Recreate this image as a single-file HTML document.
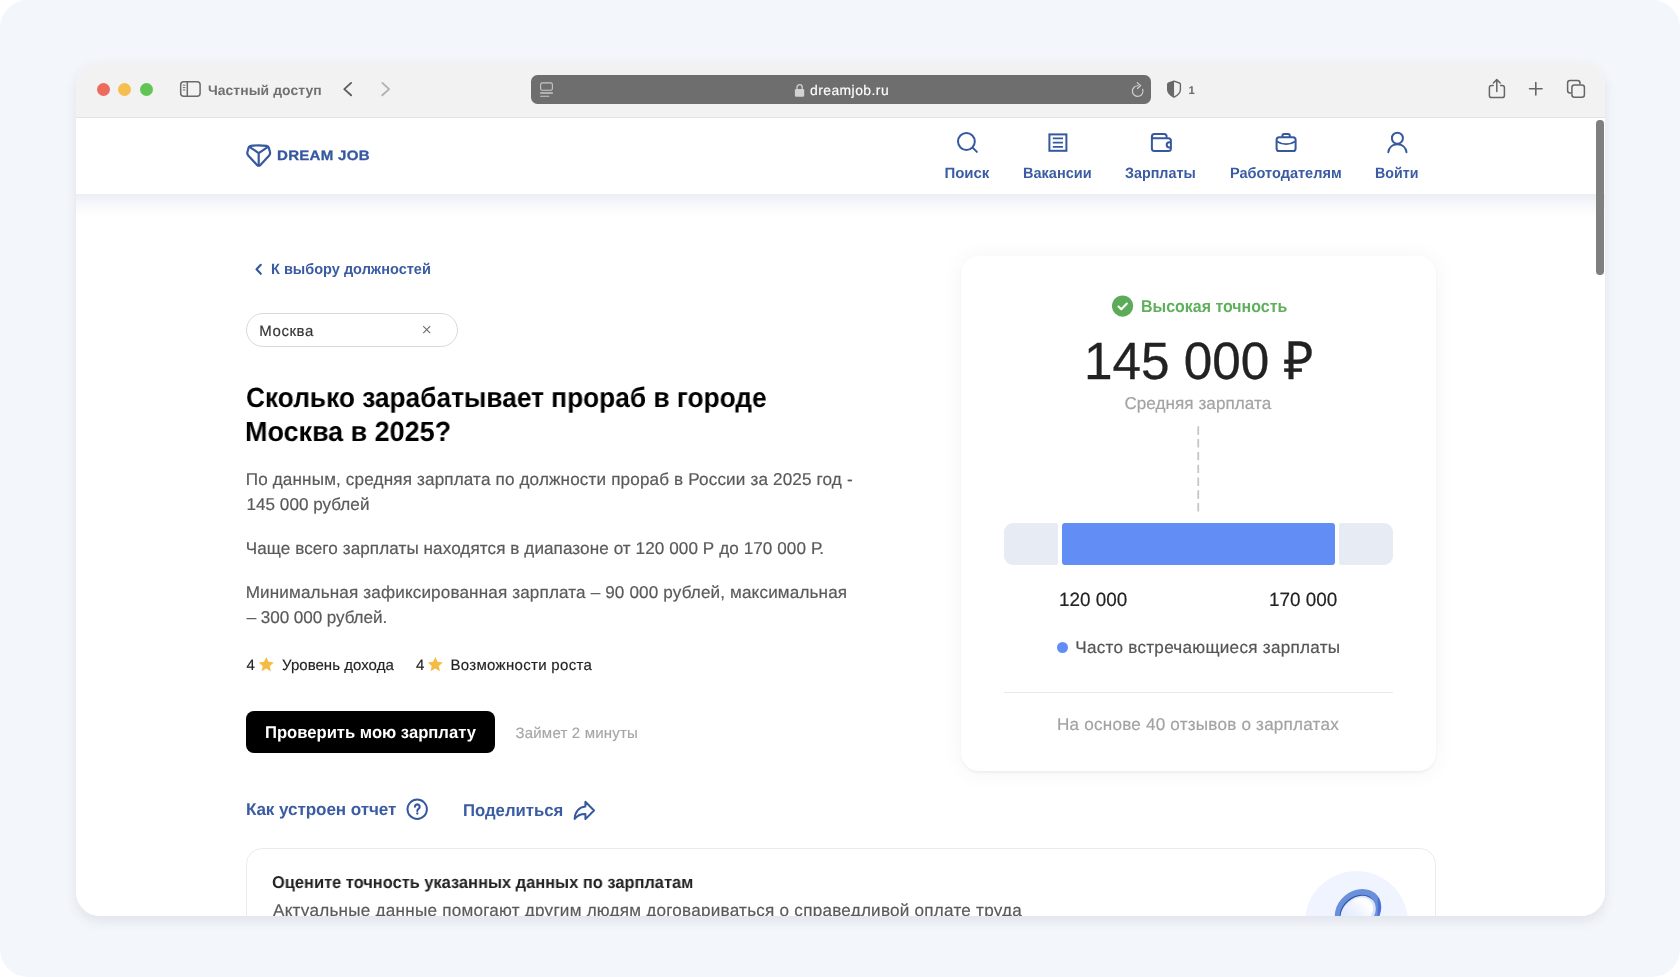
<!DOCTYPE html>
<html lang="ru">
<head>
<meta charset="utf-8">
<title>Сколько зарабатывает прораб в городе Москва в 2025? — Dream Job</title>
<style>
html,body{margin:0;padding:0;background:#fff;}
body{width:1680px;height:977px;overflow:hidden;position:relative;font-family:"Liberation Sans",sans-serif;}
.outer{position:absolute;left:0;top:0;width:1680px;height:977px;background:#f3f6fa;border-radius:28px;}
.winshadow{position:absolute;left:76px;top:62px;width:1529px;height:854px;border-radius:24px;box-shadow:0 5px 12px rgba(85,100,130,.12);}
.win{position:absolute;left:76px;top:62px;width:1529px;height:854px;border-radius:24px;overflow:hidden;background:#fff;}
.page{position:absolute;left:-76px;top:-62px;width:1680px;height:977px;will-change:transform;}
.page *{position:absolute;box-sizing:border-box;}
.w{left:0;top:0;width:0;height:0;margin:0;padding:0;font-size:0;}
a.t{text-decoration:none;}
.t{line-height:1;white-space:nowrap;text-rendering:geometricPrecision;font-family:"Liberation Sans",sans-serif;}
svg{overflow:visible;}
.toolbar{left:76px;top:62px;width:1529px;height:56px;background:#f2f2f2;border-bottom:1px solid #e3e3e3;}
.dot{width:13px;height:13px;border-radius:50%;top:83px;}
.urlbar{left:531px;top:75px;width:620px;height:29.3px;border-radius:6.5px;background:#6e6e6e;}
.sitehead{left:76px;top:118px;width:1529px;height:75.8px;background:#fff;}
.headshadow{left:76px;top:193.8px;width:1529px;height:24px;background:linear-gradient(to bottom,#eceef5 0%,#f4f5f9 30%,#fbfbfd 65%,#ffffff 100%);}
.scroll{left:1596.400px;top:119.500px;width:7.400px;height:155.500px;border-radius:3.700px;background:#7f7f7f;}
.pill{left:246px;top:313px;width:212px;height:33.5px;border:1px solid #d9d9d9;border-radius:17px;background:#fff;}
.btn{left:246px;top:711px;width:249px;height:42px;border-radius:8px;background:#000;}
.card{left:961px;top:256px;width:475px;height:515px;border-radius:18px;background:#fff;box-shadow:0 1px 24px rgba(0,0,0,.05),0 1.500px 3px rgba(0,0,0,.05);}
.bar{top:522.8px;height:42.6px;}
.divider{left:1004px;top:692px;width:389px;height:1px;background:#e9e9e9;}
.card2{left:246px;top:848px;width:1190px;height:160px;border:1px solid #ebebeb;border-radius:16px;background:#fff;}
</style>
</head>
<body>
<div class="outer"></div>
<div class="winshadow"></div>
<div class="win"><div class="page">

<!-- ===== browser toolbar ===== -->
<div class="toolbar"></div>
<div class="dot" style="left:97px;background:#ec6a5e;"></div>
<div class="dot" style="left:118.3px;background:#f4bf4f;"></div>
<div class="dot" style="left:139.5px;background:#61c554;"></div>

<!-- sidebar icon -->
<svg style="left:179px;top:80px" width="23" height="18" viewBox="179 80 23 18" fill="none" stroke="#6a6a6a" stroke-width="1.5">
<rect x="180.7" y="81.7" width="19.4" height="14.6" rx="3"/>
<path d="M187.3 81.7V96.3"/>
<path d="M182.8 85.2h2.6M182.8 87.6h2.6M182.8 90h2.6" stroke-width="1"/>
</svg>
<!-- back / forward -->
<svg style="left:340px;top:80px" width="54" height="18" viewBox="340 80 54 18" fill="none" stroke-width="1.9" stroke-linecap="round" stroke-linejoin="round">
<path d="M351.100 82.900 344.300 89.100 351.100 95.300" stroke="#5e5e5e"/>
<path d="M382.300 82.900 389.100 89.100 382.300 95.300" stroke="#b2b2b2"/>
</svg>

<div class="urlbar"></div>
<!-- reader icon -->
<svg style="left:539px;top:81px" width="16" height="17" viewBox="539 81 16 17" fill="none" stroke="#c9c9c9" stroke-width="1.1" stroke-linecap="round">
<rect x="540.6" y="82.9" width="11.8" height="7.3" rx="1.8"/>
<path d="M540.6 93h11.8" stroke-width="1.3"/>
<path d="M540.6 96.3h8.2"/>
</svg>
<!-- lock -->
<svg style="left:794px;top:83px" width="11" height="14" viewBox="794 83 11 14">
<path d="M797 89.2v-1.9a2.6 2.6 0 0 1 5.2 0v1.9" fill="none" stroke="#d2d2d2" stroke-width="1.3"/>
<rect x="794.9" y="88.9" width="9.3" height="7.9" rx="1.4" fill="#d2d2d2"/>
</svg>
<!-- reload -->
<svg style="left:1129px;top:82px" width="18" height="18" viewBox="1129 82 18 18" fill="none" stroke="#cfcfcf" stroke-width="1.2" stroke-linecap="round" stroke-linejoin="round">
<path d="M1142.700 89.300A5.300 5.300 0 1 1 1138.200 85.800"/>
<path d="M1137.300 82.700 1140.700 85.600 1137.500 88.500"/>
</svg>
<!-- shield -->
<svg style="left:1165px;top:79px" width="18" height="20" viewBox="1165 79 18 20">
<path d="M1174.050 81.100 1179.300 83Q1180.400 83.400 1180.400 84.600V89.600C1180.400 93.200 1177.600 95.400 1174.050 97.200C1170.500 95.400 1167.700 93.200 1167.700 89.600V84.600Q1167.700 83.400 1168.800 83Z" fill="none" stroke="#696969" stroke-width="1.400" stroke-linejoin="round"/>
<path d="M1174.050 81.100 1168.800 83Q1167.700 83.400 1167.700 84.600V89.600C1167.700 93.200 1170.500 95.400 1174.050 97.200Z" fill="#696969"/>
</svg>
<!-- share -->
<svg style="left:1487px;top:77px" width="20" height="23" viewBox="1487 77 20 23" fill="none" stroke="#666" stroke-width="1.5" stroke-linecap="round" stroke-linejoin="round">
<path d="M1493.2 85.400h-1.600a2.200 2.200 0 0 0-2.200 2.200v7.800a2.200 2.200 0 0 0 2.200 2.200h10.600a2.200 2.200 0 0 0 2.200-2.200v-7.800a2.200 2.200 0 0 0-2.200-2.200h-1.600"/>
<path d="M1496.800 91.600V79.800M1493.400 83 1496.800 79.600 1500.200 83"/>
</svg>
<!-- plus -->
<svg style="left:1527px;top:80px" width="18" height="18" viewBox="1527 80 18 18" fill="none" stroke="#666" stroke-width="1.6" stroke-linecap="round">
<path d="M1529.550 88.750h12.500M1535.800 82.500v12.500"/>
</svg>
<!-- tabs -->
<svg style="left:1565px;top:78px" width="22" height="22" viewBox="1565 78 22 22" fill="none" stroke="#666" stroke-width="1.5" stroke-linejoin="round">
<path d="M1571.300 93.000h-1.200a2.500 2.500 0 0 1-2.500-2.500v-7.400a2.500 2.500 0 0 1 2.500-2.500h7.400a2.500 2.500 0 0 1 2.500 2.500v1.200"/>
<rect x="1571.900" y="84.900" width="12.500" height="12.300" rx="2.500"/>
</svg>

<!-- ===== site header ===== -->
<div class="sitehead"></div>
<div class="headshadow"></div>

<!-- logo mark -->
<svg style="left:245px;top:143px" width="28" height="25" viewBox="245 143 28 25" fill="none" stroke="#36589e" stroke-width="2.200" stroke-linejoin="round" stroke-linecap="round">
<path d="M250.800 145.900Q258.700 144.700 266.600 145.900Q268.400 146.200 268.900 147.900L270 152.300Q270.400 154 269.200 155.400L260.400 164.900Q258.700 166.600 257 164.900L248.200 155.400Q247 154 247.400 152.300L248.500 147.900Q249 146.200 250.800 145.900Z"/>
<path d="M249.400 146.800 258.700 153.100 268 146.800M258.700 153.100V165.300"/>
</svg>

<!-- nav icons -->
<svg style="left:955px;top:130px" width="25" height="25" viewBox="955 130 25 25" fill="none" stroke="#36589e" stroke-width="2" stroke-linecap="round">
<circle cx="966.400" cy="141.500" r="8.400"/>
<path d="M972.600 147.600 976.900 151.900"/>
</svg>
<svg style="left:1047px;top:132px" width="22" height="21" viewBox="1047 132 22 21" fill="none" stroke="#36589e" stroke-width="2">
<rect x="1049.400" y="134.400" width="17" height="16.400"/>
<path d="M1052.800 138.300h10.200M1052.800 142.600h10.200M1052.800 146.900h10.200" stroke-width="1.800"/>
</svg>
<svg style="left:1149px;top:132px" width="25" height="22" viewBox="1149 132 25 22" fill="none" stroke="#36589e" stroke-width="2" stroke-linejoin="round">
<path d="M1151.900 138.300v-1.700a2.500 2.500 0 0 1 2.500-2.500h9.700a2.500 2.500 0 0 1 2.500 2.500v1.700"/>
<path d="M1151.900 137.300v11.200a2.500 2.500 0 0 0 2.500 2.500h14a2.500 2.500 0 0 0 2.500-2.500v-7.700a2.500 2.500 0 0 0-2.500-2.500h-14.500a2 2 0 0 1-2-2"/>
<path d="M1170.900 142.200h-1.600a2.600 2.600 0 0 0 0 5.200h1.600"/>
</svg>
<svg style="left:1274px;top:131px" width="25" height="23" viewBox="1274 131 25 23" fill="none" stroke="#36589e" stroke-width="2" stroke-linejoin="round">
<rect x="1276.600" y="137.200" width="19" height="13.800" rx="2.600"/>
<path d="M1282.400 137.200v-1.400a1.700 1.700 0 0 1 1.700-1.700h4a1.700 1.700 0 0 1 1.700 1.700v1.400"/>
<path d="M1276.600 141.200c3.200 2.100 6.300 3 9.500 3s6.300-.9 9.500-3" stroke-width="1.800"/>
</svg>
<svg style="left:1385px;top:130px" width="25" height="25" viewBox="1385 130 25 25" fill="none" stroke="#36589e" stroke-width="2" stroke-linecap="round">
<circle cx="1397.400" cy="138.200" r="5.500"/>
<path d="M1388.300 152.200c.7-4.800 4.200-7.900 9.100-7.900s8.400 3.100 9.100 7.900"/>
</svg>

<!-- ===== left column ===== -->
<svg style="left:254px;top:262px" width="10" height="14" viewBox="254 262 10 14" fill="none" stroke="#36589e" stroke-width="2.1" stroke-linecap="round" stroke-linejoin="round">
<path d="M260.800 264.800 256.500 269.300 260.800 273.800"/>
</svg>
<div class="pill"></div>
<svg style="left:421px;top:324px" width="12" height="12" viewBox="421 324 12 12" fill="none" stroke="#6b6b6b" stroke-width="1.100">
<path d="M423.200 326.200 430.200 333.200M430.200 326.200 423.200 333.200"/>
</svg>

<!-- stars -->
<svg style="left:257.700px;top:655.700px" width="16.600" height="16.600" viewBox="0 0 16 16"><path d="M8 .9l2.150 4.650 5.050.6-3.750 3.450 1 5L8 12.100 3.550 14.600l1-5L.8 6.150l5.050-.6z" fill="#f6bb42"/></svg>
<svg style="left:427.300px;top:655.700px" width="16.600" height="16.600" viewBox="0 0 16 16"><path d="M8 .9l2.150 4.650 5.050.6-3.750 3.450 1 5L8 12.100 3.550 14.600l1-5L.8 6.150l5.050-.6z" fill="#f6bb42"/></svg>

<div class="btn"></div>

<!-- help icon -->
<svg style="left:405px;top:797px" width="24" height="24" viewBox="405 797 24 24" fill="none" stroke="#36589e" stroke-width="2">
<circle cx="417.200" cy="809.200" r="9.700"/>
<path d="M414.900 806.800a2.400 2.400 0 1 1 3.600 2.100c-.8.500-1.200 1-1.200 2" stroke-width="2.100" stroke-linecap="round"/>
<circle cx="417.300" cy="813.500" r="1.150" fill="#36589e" stroke="none"/>
</svg>
<!-- share arrow -->
<svg style="left:572px;top:799px" width="25" height="23" viewBox="572 799 25 23" fill="none" stroke="#36589e" stroke-width="2" stroke-linejoin="round" stroke-linecap="round">
<path d="M585.400 801.700 594 810.500 585.400 819.100V814c-4.600-.2-8.100 1.500-10.700 5 .1-6.800 4.200-12 10.700-12.500z"/>
</svg>

<!-- ===== salary card ===== -->
<div class="card"></div>
<svg style="left:1111px;top:295px" width="23" height="23" viewBox="1111 295 23 23">
<circle cx="1122.600" cy="306.100" r="10.600" fill="#5bab59"/>
<path d="M1118.500 306.500 1121.300 309.200 1126.900 303.600" fill="none" stroke="#fff" stroke-width="2.100" stroke-linecap="round" stroke-linejoin="round"/>
</svg>
<svg style="left:1196px;top:426px" width="4" height="86" viewBox="1196 426 4 86">
<path d="M1198.250 426.300V511.500" stroke="#c6c6c6" stroke-width="1.800" stroke-dasharray="8.400 4.400" fill="none"/>
</svg>
<div class="bar" style="left:1003.800px;width:54.400px;background:#e7ebf3;border-radius:9px 2px 2px 9px;"></div>
<div class="bar" style="left:1062px;width:273px;background:#628df5;border-radius:3px;"></div>
<div class="bar" style="left:1338.800px;width:54.400px;background:#e7ebf3;border-radius:2px 9px 9px 2px;"></div>
<div style="left:1057px;top:641.500px;width:11px;height:11px;border-radius:50%;background:#628df5;"></div>
<div class="divider"></div>

<!-- ===== bottom card ===== -->
<div class="card2"></div>
<div style="left:1305.200px;top:871.400px;width:103px;height:103px;border-radius:50%;background:#eff4fe;"></div>
<svg style="left:1330px;top:884px" width="56" height="60" viewBox="1330 884 56 60">
<defs>
<linearGradient id="lens" gradientUnits="userSpaceOnUse" x1="1342" y1="925" x2="1372" y2="897" gradientTransform="rotate(40 1356.800 913)"><stop offset="0" stop-color="#dce7fd"/><stop offset=".5" stop-color="#eef3fe"/><stop offset=".8" stop-color="#ffffff"/></linearGradient>
<linearGradient id="ring" gradientUnits="userSpaceOnUse" x1="1335" y1="0" x2="1381.200" y2="0" gradientTransform="rotate(40 1358 911.400)"><stop offset="0" stop-color="#6a90db"/><stop offset=".91" stop-color="#6a90db"/><stop offset=".94" stop-color="#4a72d4"/></linearGradient>
</defs>
<ellipse cx="1358" cy="911.400" rx="25" ry="20.500" transform="rotate(-40 1358 911.400)" fill="url(#ring)"/>
<ellipse cx="1357.700" cy="912" rx="19.600" ry="15.400" transform="rotate(-40 1357.700 912)" fill="#2f55a8"/>
<ellipse cx="1358.300" cy="912.700" rx="19.200" ry="15" transform="rotate(-40 1358.300 912.700)" fill="#d6e3fc"/>
<ellipse cx="1356.800" cy="913" rx="18.200" ry="13.200" transform="rotate(-40 1356.800 913)" fill="url(#lens)"/>
</svg>

<!-- ===== texts ===== -->
<span class="t" style="left:207.90px;top:84.00px;font-size:13.9px;font-weight:700;color:#707070;letter-spacing:0.077px">Частный доступ</span>
<span class="t" style="left:810.00px;top:84.00px;font-size:13.9px;font-weight:400;color:#ffffff;letter-spacing:0.450px;-webkit-text-stroke:0.15px #ffffff">dreamjob.ru</span>
<span class="t" style="left:1188.50px;top:86.00px;font-size:11.3px;font-weight:700;color:#6b6b6b;letter-spacing:0.000px">1</span>
<a class="t" style="left:276.50px;top:149.00px;font-size:13.7px;font-weight:700;color:#36589e;letter-spacing:0.250px;transform:scaleX(1.1);transform-origin:0 0;-webkit-text-stroke:0.3px #36589e">DREAM JOB</a>
<nav class="w">
<a class="t" style="left:944.60px;top:166.00px;font-size:15px;font-weight:700;color:#3b5ca2;letter-spacing:-0.100px">Поиск</a>
<a class="t" style="left:1023.43px;top:166.00px;font-size:15px;font-weight:700;color:#3b5ca2;letter-spacing:0.000px;transform:scaleX(0.9681);transform-origin:0 0">Вакансии</a>
<a class="t" style="left:1125.44px;top:166.00px;font-size:15px;font-weight:700;color:#3b5ca2;letter-spacing:0.000px;transform:scaleX(0.9556);transform-origin:0 0">Зарплаты</a>
<a class="t" style="left:1230.43px;top:166.00px;font-size:15px;font-weight:700;color:#3b5ca2;letter-spacing:0.000px;transform:scaleX(0.969);transform-origin:0 0">Работодателям</a>
<a class="t" style="left:1375.45px;top:166.00px;font-size:15px;font-weight:700;color:#3b5ca2;letter-spacing:0.000px;transform:scaleX(0.9477);transform-origin:0 0">Войти</a>
</nav>
<a class="t" style="left:270.73px;top:262.00px;font-size:15px;font-weight:700;color:#3b5ca2;letter-spacing:0.000px;transform:scaleX(0.9687);transform-origin:0 0">К выбору должностей</a>
<span class="t" style="left:259.30px;top:324.00px;font-size:15px;font-weight:400;color:#333333;letter-spacing:0.560px;-webkit-text-stroke:0.15px #333333">Москва</span>
<h1 class="w">
<span class="t" style="left:245.85px;top:384.00px;font-size:27.8px;font-weight:700;color:#000000;letter-spacing:0.000px;transform:scaleX(0.9454);transform-origin:0 0">Сколько зарабатывает прораб в городе</span>
<span class="t" style="left:244.86px;top:418.00px;font-size:27.8px;font-weight:700;color:#000000;letter-spacing:0.000px;transform:scaleX(0.9689);transform-origin:0 0">Москва в 2025?</span>
</h1>
<p class="w">
<span class="t" style="left:245.70px;top:471.00px;font-size:17.1px;font-weight:400;color:#5a5a5a;letter-spacing:0.157px;-webkit-text-stroke:0.2px #5a5a5a">По данным, средняя зарплата по должности прораб в России за 2025 год -</span>
<span class="t" style="left:246.50px;top:496.00px;font-size:17.1px;font-weight:400;color:#5a5a5a;letter-spacing:0.023px;-webkit-text-stroke:0.2px #5a5a5a">145 000 рублей</span>
</p>
<p class="w">
<span class="t" style="left:245.70px;top:540.00px;font-size:17.1px;font-weight:400;color:#5a5a5a;letter-spacing:0.087px;-webkit-text-stroke:0.2px #5a5a5a">Чаще всего зарплаты находятся в диапазоне от 120 000 Р до 170 000 Р.</span>
</p>
<p class="w">
<span class="t" style="left:245.70px;top:584.00px;font-size:17.1px;font-weight:400;color:#5a5a5a;letter-spacing:0.148px;-webkit-text-stroke:0.2px #5a5a5a">Минимальная зафиксированная зарплата – 90 000 рублей, максимальная</span>
<span class="t" style="left:246.70px;top:609.00px;font-size:17.1px;font-weight:400;color:#5a5a5a;letter-spacing:-0.075px;-webkit-text-stroke:0.2px #5a5a5a">– 300 000 рублей.</span>
</p>
<span class="t" style="left:246.50px;top:658.00px;font-size:15px;font-weight:400;color:#222222;letter-spacing:0.000px;-webkit-text-stroke:0.15px #222222">4</span>
<span class="t" style="left:282.00px;top:658.00px;font-size:15px;font-weight:400;color:#222222;letter-spacing:0.038px;-webkit-text-stroke:0.15px #222222">Уровень дохода</span>
<span class="t" style="left:416.00px;top:658.00px;font-size:15px;font-weight:400;color:#222222;letter-spacing:0.000px;-webkit-text-stroke:0.15px #222222">4</span>
<span class="t" style="left:450.50px;top:658.00px;font-size:15px;font-weight:400;color:#222222;letter-spacing:0.312px;-webkit-text-stroke:0.15px #222222">Возможности роста</span>
<span class="t" style="left:264.53px;top:724.00px;font-size:17.1px;font-weight:700;color:#ffffff;letter-spacing:0.000px;transform:scaleX(0.9722);transform-origin:0 0">Проверить мою зарплату</span>
<span class="t" style="left:515.50px;top:726.00px;font-size:15px;font-weight:400;color:#a6a6a6;letter-spacing:0.196px;-webkit-text-stroke:0.15px #a6a6a6">Займет 2 минуты</span>
<a class="t" style="left:245.90px;top:801.00px;font-size:17.1px;font-weight:700;color:#3b5ca2;letter-spacing:-0.088px">Как устроен отчет</a>
<a class="t" style="left:463.02px;top:802.00px;font-size:17.1px;font-weight:700;color:#3b5ca2;letter-spacing:0.000px;transform:scaleX(0.978);transform-origin:0 0">Поделиться</a>
<span class="t" style="left:1141.07px;top:298.00px;font-size:17.1px;font-weight:700;color:#5fb05d;letter-spacing:0.000px;transform:scaleX(0.9335);transform-origin:0 0">Высокая точность</span>
<span class="t" style="left:1083.89px;top:336.00px;font-size:52.5px;font-weight:400;color:#222222;letter-spacing:0.000px;transform:scaleX(0.9769);transform-origin:0 0;-webkit-text-stroke:0.3px #222222">145 000 ₽</span>
<span class="t" style="left:1124.40px;top:395.00px;font-size:17.1px;font-weight:400;color:#a3a3a3;letter-spacing:0.053px;-webkit-text-stroke:0.2px #a3a3a3">Средняя зарплата</span>
<span class="t" style="left:1059.01px;top:591.00px;font-size:19.2px;font-weight:400;color:#222222;letter-spacing:0.000px;transform:scaleX(0.9853);transform-origin:0 0;-webkit-text-stroke:0.2px #222222">120 000</span>
<span class="t" style="left:1269.01px;top:591.00px;font-size:19.2px;font-weight:400;color:#222222;letter-spacing:0.000px;transform:scaleX(0.9853);transform-origin:0 0;-webkit-text-stroke:0.2px #222222">170 000</span>
<span class="t" style="left:1075.25px;top:639.00px;font-size:17.1px;font-weight:400;color:#555555;letter-spacing:0.278px;-webkit-text-stroke:0.2px #555555">Часто встречающиеся зарплаты</span>
<span class="t" style="left:1057.00px;top:716.00px;font-size:17.1px;font-weight:400;color:#a3a3a3;letter-spacing:0.218px;-webkit-text-stroke:0.2px #a3a3a3">На основе 40 отзывов о зарплатах</span>
<h2 class="w">
<span class="t" style="left:272.04px;top:874.00px;font-size:17.1px;font-weight:700;color:#222222;letter-spacing:0.000px;transform:scaleX(0.961);transform-origin:0 0">Оцените точность указанных данных по зарплатам</span>
</h2>
<p class="w">
<span class="t" style="left:273.00px;top:902.00px;font-size:17.1px;font-weight:400;color:#5a5a5a;letter-spacing:0.247px;-webkit-text-stroke:0.2px #5a5a5a">Актуальные данные помогают другим людям договариваться о справедливой оплате труда</span>
</p>

<div class="scroll"></div>
</div></div>
</body>
</html>
